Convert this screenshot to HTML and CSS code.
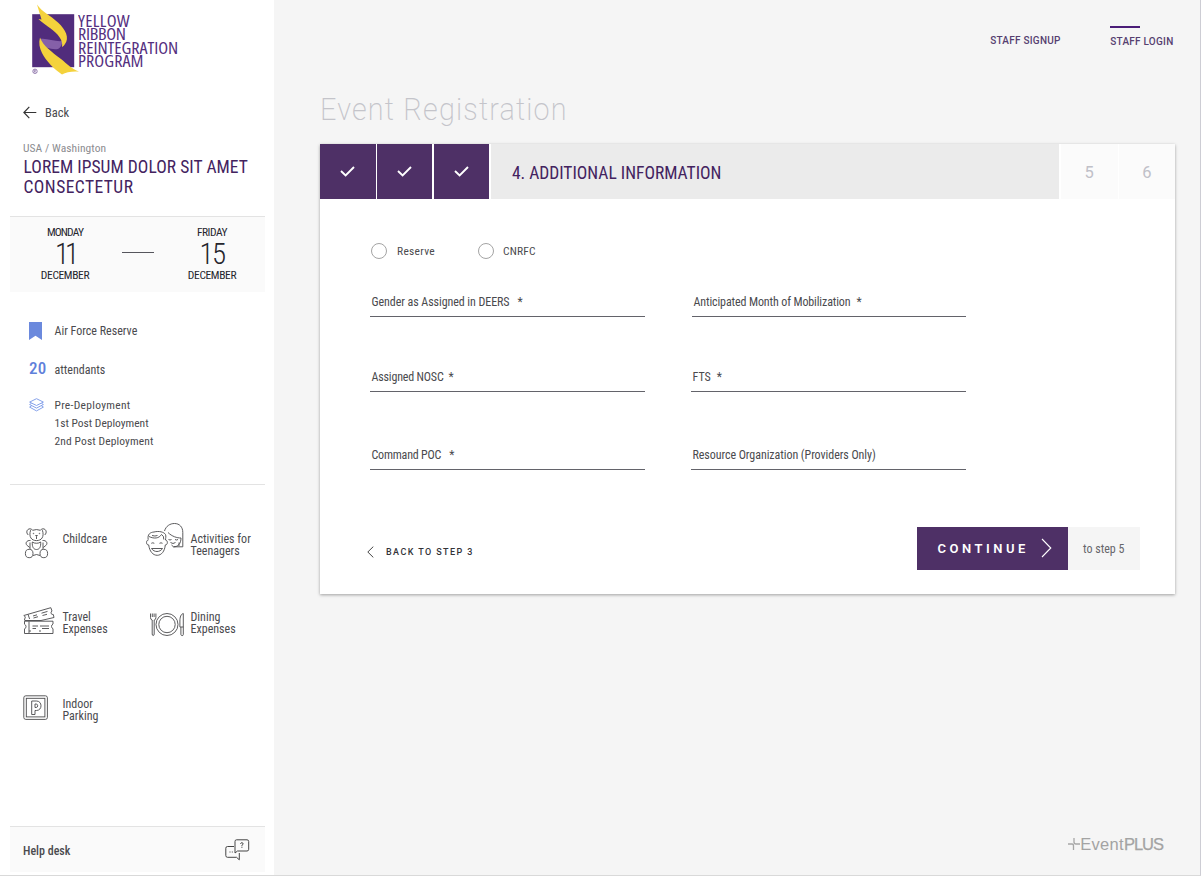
FILE: index.html
```
<!DOCTYPE html>
<html lang="en">
<head>
<meta charset="utf-8">
<title>Event Registration</title>
<link rel="stylesheet" href="styles.css">
</head>
<body>
<div class="app">
  <aside class="sidebar">
    <div class="logo">
      <svg class="logo-mark" width="50" height="78" viewBox="0 0 50 78">
        <rect x="2.2" y="14.2" width="42" height="53" fill="#512c7c"/>
        <path d="M10 39C16 37.500 25 42 32.500 41C32 45 30.500 47.500 28 49C22 50 14 47.500 11.500 44Z" fill="#8560a8"/>
        <path d="M7 4.500C12 12 20 15 28 22.500C36 30 39.500 38 35 44Q34 46 32 47C33.500 40 28 34 20 28C14 23.500 10 21 8.500 19L11.500 19.500Z" fill="#f4d23c"/>
        <path d="M10 37.500C13 46 22 52 31 59C37 64 42 69 49 71.500C42 71 36 72 32 74.500C24 69 16 61 12 53C9.500 48 8.500 43 10 37.500Z" fill="#f4d23c"/>
        <circle cx="5" cy="71.300" r="2.200" fill="none" stroke="#6c4a90" stroke-width=".7"/>
        <path d="M4.300 72.600V70.100H5.300Q6 70.800 5.200 71.400H4.400M5.200 71.400L5.900 72.600" fill="none" stroke="#6c4a90" stroke-width=".5"/>
      </svg>
      <div class="logo-text"><span class="l1">YELLOW</span><span class="l2">RIBBON</span><span class="l3">REINTEGRATION</span><span class="l4">PROGRAM</span></div>
    </div>

    <a class="back">
      <svg width="14" height="13" viewBox="0 0 14 13"><path d="M6.300 .8L.9 6.500L6.300 12.200M.9 6.500H13.300" fill="none" stroke="#333" stroke-width="1.200"/></svg>
      <span>Back</span>
    </a>
    <div class="place">USA / Washington</div>
    <h2 class="event-title">LOREM IPSUM DOLOR SIT AMET<br><span class="t2">CONSECTETUR</span></h2>

    <div class="dates">
      <div class="date from"><span class="day">MONDAY</span><span class="num eleven">11</span><span class="month">DECEMBER</span></div>
      <div class="dash"></div>
      <div class="date to"><span class="day fri">FRIDAY</span><span class="num">15</span><span class="month">DECEMBER</span></div>
    </div>

    <div class="facts">
      <div class="fact branch">
        <svg width="13" height="18" viewBox="0 0 13 18"><path d="M0 0H13V18L6.500 13.800L0 18Z" fill="#6b89dd"/></svg>
        <span>Air Force Reserve</span>
      </div>
      <div class="fact people"><b class="count">20</b><span>attendants</span></div>
      <div class="fact phases">
        <svg width="15" height="14" viewBox="0 0 15 14" fill="none" stroke="#86a2ea" stroke-width="1"><path d="M7.500 .7L14.400 4.100L7.500 7.500L.6 4.100Z"/><path d="M2.500 5.400L.6 6.500L7.500 10.100L14.400 6.500L12.500 5.400"/><path d="M2.500 8L.6 9.100L7.500 12.900L14.400 9.100L12.500 8"/></svg>
        <div class="phase-list"><span class="p1">Pre-Deployment</span><span>1st Post Deployment</span><span class="p3">2nd Post Deployment</span></div>
      </div>
    </div>

    <div class="amenities">
      <div class="amenity">
        <svg width="40" height="40" viewBox="0 0 40 40" class="ico">
          <path d="M7.600 8.200C5.500 15 8.500 18.600 13.500 18.600S21.500 15 19.400 8.200"/>
          <path d="M5.300 13C2.500 10.500 4 6.800 7 6.800Q8.800 6.800 9.600 8.300Q13.500 6.800 17.400 8.300Q18.200 6.800 20 6.800C23 6.800 24.500 10.500 21.700 13"/>
          <circle cx="10.500" cy="11.500" r=".3"/><circle cx="16.500" cy="11.500" r=".3"/><path d="M12.600 13.500H14.400L13.500 14.600ZM13.500 15V17"/>
          <path d="M7.500 18.500C3.500 18 1.800 21.500 4.200 23.500L6.700 25.500M19.500 18.500C23.500 18 25.200 21.500 22.800 23.500L20.300 25.500"/>
          <path d="M9.300 20C9 25 10.500 27.500 13.500 27.500S18 25 17.700 20C15.500 21.700 11.500 21.700 9.300 20Z"/>
          <path d="M7 20.500V27M20 20.500V27M10 33.500Q13.500 31.500 17 33.500"/>
          <ellipse cx="6.200" cy="31.500" rx="3.800" ry="4.200"/><ellipse cx="20.800" cy="31.500" rx="3.800" ry="4.200"/>
        </svg>
        <span class="label">Childcare</span>
      </div>
      <div class="amenity">
        <svg width="44" height="40" viewBox="0 0 44 40" class="ico">
          <path d="M2.200 17.500C1.200 12 4.500 10.300 8 10C13 8.700 18 10 19.500 12.500C20.300 14.500 19.500 16 19.500 18"/>
          <path d="M2.400 18C-.3 18 0 23.500 2.700 22.900C3.500 29.500 7 33.300 11.200 33.300S18.700 29.500 19.300 22.900C22 23.300 22 18 19.500 18"/>
          <path d="M3 14.500C8 17 13 16.500 15.500 12.500Q18 13.500 17.800 17.500M6 13.500Q9 14.500 11.500 13.500"/>
          <path d="M5.300 21.300Q6.800 20.300 8.300 21.300M13.500 21.300Q15 20.300 16.500 21.300M5.500 26.500C8 30.500 14 30.500 16.500 26.500Z"/>
          <path d="M18.500 9C20 4 24 1.500 28.500 1.500C33.500 1.500 36.800 5 36.800 10.500V24.800H27.500L25.500 23"/>
          <path d="M22 10.500C26 14.500 31 16 35 16C35 21.500 32 25 27.500 24.800M22.500 17.500Q24 18.500 25.500 17.500M29 17.500Q30.500 18.500 32 17.500M24.500 20.500Q27 22.500 29.500 20.500M33 20.500V24"/>
        </svg>
        <span class="label">Activities for<br><span>Teenagers</span></span>
      </div>
      <div class="amenity">
        <svg width="40" height="40" viewBox="0 0 40 40" class="ico">
          <path d="M.8 15.500L27.800 7.700L29 11Q27.500 12 28.200 13.700Q29 14.700 30.300 14.500L31 17.500L18 20.500H1.800L1.500 19Q2.800 18 2 16.700Q1.500 15.800 .8 15.500Z"/>
          <path d="M5 14.300L6.600 19M10 16L14 14.800M10.500 18L15 16.700M18.500 13.200L24.500 11.400M19.500 15.500L24 14.300"/>
          <path d="M1.500 21.200H30V24Q28.500 24.800 28.500 26.500Q28.500 28 30 28.700V33.500H1.500V29Q3 28 3 26.500Q3 25 1.500 24.200Z"/>
          <path d="M6 21.500V33M9.500 26H15M9.500 28.500H13M17 26H26M19 28.500H26"/><path d="M6 31H26" stroke-dasharray="2 8"/>
        </svg>
        <span class="label">Travel<br><span>Expenses</span></span>
      </div>
      <div class="amenity">
        <svg width="44" height="40" viewBox="0 0 44 40" class="ico">
          <path d="M4.500 13.500V17.500Q4.500 19.800 6.200 20V34Q6.200 35.500 7.200 35.500T8.200 34V20Q9.900 19.800 9.900 17.500V13.500M6.300 13.500V17M8.100 13.500V17"/>
          <circle cx="21" cy="24.500" r="11"/><circle cx="21" cy="24.500" r="8.200"/>
          <path d="M37.300 13.500V34.500Q37.300 35.600 36.200 35.600T34.900 34.500V27H33.900V21C33.900 17 35 14 37.300 13.500ZM34.900 27H37.300"/>
        </svg>
        <span class="label">Dining<br><span>Expenses</span></span>
      </div>
      <div class="amenity">
        <svg width="40" height="40" viewBox="0 0 40 40" class="ico">
          <rect x=".8" y="8.800" width="23.600" height="23.600" rx="2"/><rect x="3.300" y="11.300" width="18.600" height="18.600"/>
          <path d="M8.700 14H13.500C19.500 14 19.500 23.500 13.500 23.500H12V27.500H8.700Z"/><path d="M12 17H13.200C15.200 17 15.200 20.500 13.200 20.500H12Z"/>
        </svg>
        <span class="label park">Indoor<br><span>Parking</span></span>
      </div>
    </div>

    <div class="help">
      <span>Help desk</span>
      <svg width="25" height="22" viewBox="0 0 25 22" fill="none" stroke="#444" stroke-width="1"><path d="M11.500 .8H22Q23.700 .8 23.700 2.500V10.300Q23.700 12 22 12H12.500L10 14V2.500Q10 .8 11.500 .8Z"/><path d="M9 7.500H2.500Q.8 7.500 .8 9.300V16.500Q.8 18.300 2.500 18.300H11.500L14.300 20.800V14"/><path d="M4.500 13H9" stroke-dasharray="1 1.300"/><path d="M15.500 4.800Q15.800 3.700 16.900 3.700Q18.200 3.800 18.100 4.900Q18 5.600 16.900 6.300V7.300M16.900 8.200V9"/></svg>
    </div>
  </aside>

  <main class="main">
    <nav class="nav"><a class="signup">STAFF SIGNUP</a><a class="login">STAFF LOGIN</a></nav>
    <h1 class="heading"><span>Event Registration</span></h1>
    <section class="card">
      <div class="steps">
        <div class="done"><svg width="15" height="11" viewBox="0 0 15 11"><path d="M1 5L5.600 9.500L14 1"/></svg></div>
        <div class="done"><svg width="15" height="11" viewBox="0 0 15 11"><path d="M1 5L5.600 9.500L14 1"/></svg></div>
        <div class="done"><svg width="15" height="11" viewBox="0 0 15 11"><path d="M1 5L5.600 9.500L14 1"/></svg></div>
        <div class="current">4. ADDITIONAL INFORMATION</div>
        <div class="next">5</div>
        <div class="next">6</div>
      </div>
      <div class="radios">
        <label class="radio reserve"><i></i><span>Reserve</span></label>
        <label class="radio cnrfc"><i></i><span>CNRFC</span></label>
      </div>
      <div class="fields">
        <div class="field gender"><span>Gender as Assigned in DEERS</span><em>*</em></div>
        <div class="field month-of"><span>Anticipated Month of Mobilization</span><em>*</em></div>
        <div class="field nosc"><span>Assigned NOSC</span><em>*</em></div>
        <div class="field fts"><span>FTS</span><em>*</em></div>
        <div class="field poc"><span>Command POC</span><em>*</em></div>
        <div class="field org"><span>Resource Organization (Providers Only)</span></div>
      </div>
      <div class="actions">
        <a class="prev"><svg width="7" height="12" viewBox="0 0 7 12"><path d="M6.300 .6L.8 6L6.300 11.400" fill="none" stroke="#444" stroke-width="1"/></svg><span>BACK TO STEP 3</span></a>
        <div class="go">
          <button class="continue"><span>CONTINUE</span><svg width="11" height="20" viewBox="0 0 11 20"><path d="M1 1L9.800 10L1 19" fill="none" stroke="#fff" stroke-width="1.100"/></svg></button>
          <div class="hint">to step 5</div>
        </div>
      </div>
    </section>
    <footer class="brand">
      <svg width="12" height="12" viewBox="0 0 12 12"><path d="M6 0V4Q6 6 8 6H12M0 6H4Q5.500 6 5.500 8V12" fill="none" stroke="#a6a6a6" stroke-width="1.300"/></svg>
      <span class="brand-a">Event</span><span class="brand-b">PLUS</span>
    </footer>
  </main>
</div>
</body>
</html>
```
FILE: styles.css
```
* { box-sizing: border-box; }

body {
  margin: 0;
  font-family: Roboto, sans-serif;
  font-stretch: 75%;
  font-size: 12px;
  color: #4a4a4e;
  background: #f5f5f5;
}

.app {
  display: flex;
  width: 1201px;
  height: 876px;
  border-right: 1px solid #cdcdd4;
  border-bottom: 1px solid #d9d9d9;
  overflow: hidden;
}

/* Sidebar */
.sidebar {
  display: flex;
  flex-direction: column;
  width: 274px;
  padding: 0 9px 3px 10px;
  background: #fff;
  white-space: nowrap;
}

.logo { display: flex; height: 102px; padding-left: 20px; }
.logo-mark { margin-right: -2px; }
.logo-text {
  display: flex;
  flex-direction: column;
  padding-top: 13.500px;
  margin-left: -.5px;
  font-family: "Open Sans", sans-serif;
  font-size: 16.500px;
  font-stretch: 75%;
  line-height: 13.500px;
  color: #55307f;
  transform: scaleX(1.1);
  transform-origin: 0 0;
}
.l1 { letter-spacing: .25px; }
.l2 { letter-spacing: -.3px; }
.l3 { letter-spacing: -.05px; }
.l4 { letter-spacing: .05px; }

.back { display: flex; align-items: center; gap: 8.500px; height: 20px; padding-left: 12.500px; font-size: 12.500px; }
.place { margin-top: 18px; padding-left: 13px; font-size: 11.500px; line-height: 16px; letter-spacing: .07px; color: #8c8c90; }
.event-title { margin: 2px 0 19px; padding-left: 13.500px; font-size: 17.500px; line-height: 19.500px; font-weight: 400; letter-spacing: .05px; color: #43235f; }
.t2 { letter-spacing: .45px; }

.dates { display: flex; height: 76px; padding-top: 8px; background: #fafafa; border-top: 1px solid #e3e3e3; color: #25252d; }
.date { display: flex; flex-direction: column; align-items: center; font-size: 11.500px; line-height: 14px; }
.from { width: 110px; }
.to { width: 106px; margin-left: auto; }
.day { letter-spacing: -.85px; }
.fri { letter-spacing: -.5px; }
.month { letter-spacing: -.38px; }
.num { margin: 1px 0 0; font-size: 29px; line-height: 28px; font-weight: 300; letter-spacing: -1.500px; }
.eleven { letter-spacing: -4px; }
.dash { width: 31.500px; height: 1px; margin: 27px 0 0 2px; background: #55555c; }

.facts { margin-top: 29px; padding-left: 19px; }
.fact { display: grid; grid-template-columns: 25.500px auto; line-height: 20px; }
.branch svg { margin-top: 1px; }
.people { height: 20px; margin-top: 16.500px; align-items: baseline; }
.count { font-size: 17px; font-weight: 500; color: #5f80da; letter-spacing: .3px; }
.phases { margin-top: 18px; font-size: 11.500px; line-height: 18px; }
.phases svg { margin-top: 2px; }
.phase-list { display: flex; flex-direction: column; }
.p1 { letter-spacing: .3px; }
.p3 { letter-spacing: .12px; }

.amenities {
  display: grid;
  grid-template-columns: 123px auto;
  grid-template-rows: 78px 87px 60px;
  margin-top: 34.500px;
  padding: 37px 0 0 13px;
  border-top: 1px solid #e3e3e3;
}
.amenity { display: flex; }
.label { padding-top: 10.500px; line-height: 12.800px; }
.ico { flex: none; fill: none; stroke: #4a4a4c; stroke-width: .9; margin-right: -.5px; }
.amenity:nth-child(even) .ico { margin-right: .5px; }

.help { display: flex; justify-content: space-between; align-items: center; height: 46px; margin-top: auto; padding: 2px 15px 0 13px; background: #fafafa; border-top: 1px solid #e3e3e3; font-weight: 500; }
.help svg { margin-top: -2px; }

/* Main */
.main { flex: 1; padding: 0 25px 0 46px; white-space: nowrap; }

.nav { display: flex; justify-content: flex-end; height: 88px; padding-top: 26px; font-size: 10px; font-stretch: 100%; line-height: 14px; font-weight: 500; color: #563f70; }
.signup { padding-top: 7.500px; margin-right: 49.500px; letter-spacing: .25px; }
.login { padding-top: 8.500px; margin-right: 1.500px; letter-spacing: .25px; background: linear-gradient(#4b1d78, #4b1d78) no-repeat 0 0 / 30px 2px; }

.heading { height: 56px; margin: 0; padding-top: 1px; font-size: 31px; font-stretch: 100%; line-height: 42px; font-weight: 200; letter-spacing: 1.250px; color: #c4c4ca; }
.heading span { display: inline-block; transform: scaleX(.93); transform-origin: 0 0; }

.card { height: 450px; background: #fff; box-shadow: 0 1px 3px rgba(0, 0, 0, .35); }
.steps { display: grid; grid-template-columns: 55.500px 55.500px 55.500px 1fr 57px 56px; grid-template-rows: 55px; gap: 0 1.300px; height: 55px; }
.done { display: flex; align-items: center; justify-content: center; background: #4e3066; }
.done svg { fill: none; stroke: #fff; stroke-width: 1.900; }
.current { margin-left: 1px; padding: 3px 0 0 20.500px; background: #ebebeb; font-size: 17.500px; line-height: 52px; color: #43235f; }
.next { padding-top: 3px; background: #fbfbfb; font-size: 16.500px; font-stretch: 100%; line-height: 52px; text-align: center; color: #c0c0c8; }

.radios { display: flex; height: 92px; padding: 42px 0 0 50.500px; font-size: 11.500px; line-height: 20px; }
.radio { display: flex; height: 20px; }
.radio i { width: 16px; height: 16px; margin: 2px 10.500px 0 0; border: 1px solid #a4a4a4; border-radius: 50%; }
.reserve { width: 107.500px; letter-spacing: .28px; }
.cnrfc { letter-spacing: .2px; }
.cnrfc i { margin-right: 9px; }

.fields { display: grid; grid-template-columns: 275px 274.500px; grid-template-rows: 25.500px 25.500px 28.500px; gap: 49.500px 46px; margin-left: 50px; height: 178px; }
.field { display: flex; padding: .5px 0 0 1.500px; border-bottom: 1px solid #63636a; line-height: 20px; }
.field em { margin-left: 8px; font-style: normal; }
.gender { letter-spacing: -.07px; }
.month-of { margin-left: 1px; letter-spacing: -.12px; }
.month-of em, .fts em { margin-left: 6px; }
.nosc { letter-spacing: -.18px; }
.nosc em { margin-left: 5px; }
.poc { padding-top: 4px; letter-spacing: -.2px; }
.org { padding-top: 4px; letter-spacing: -.06px; }

.actions { display: flex; justify-content: space-between; padding: 58px 35px 0 47px; }
.prev { display: flex; align-items: center; gap: 12px; height: 50px; font-size: 9px; font-stretch: 100%; font-weight: 500; letter-spacing: 1.400px; color: #333338; }
.go { display: flex; height: 42.500px; }
.continue { display: flex; align-items: center; width: 151px; padding: 0 0 0 20.500px; border: 0; background: #4e3066; color: #fff; font-family: inherit; font-stretch: 100%; font-size: 13px; font-weight: 600; letter-spacing: 3.500px; }
.continue svg { margin-left: 12.500px; }
.hint { width: 72px; padding: 1px 0 0 15px; background: #f5f5f5; line-height: 42px; color: #66666a; }

.brand { display: flex; align-items: baseline; justify-content: flex-end; margin-top: 240px; padding-right: 12px; font-family: "Liberation Sans", sans-serif; font-size: 16.500px; line-height: 20px; color: #a3a3a3; }
.brand-a { letter-spacing: .3px; }
.brand-b { letter-spacing: -1px; -webkit-text-stroke: .25px #a3a3a3; }
```
